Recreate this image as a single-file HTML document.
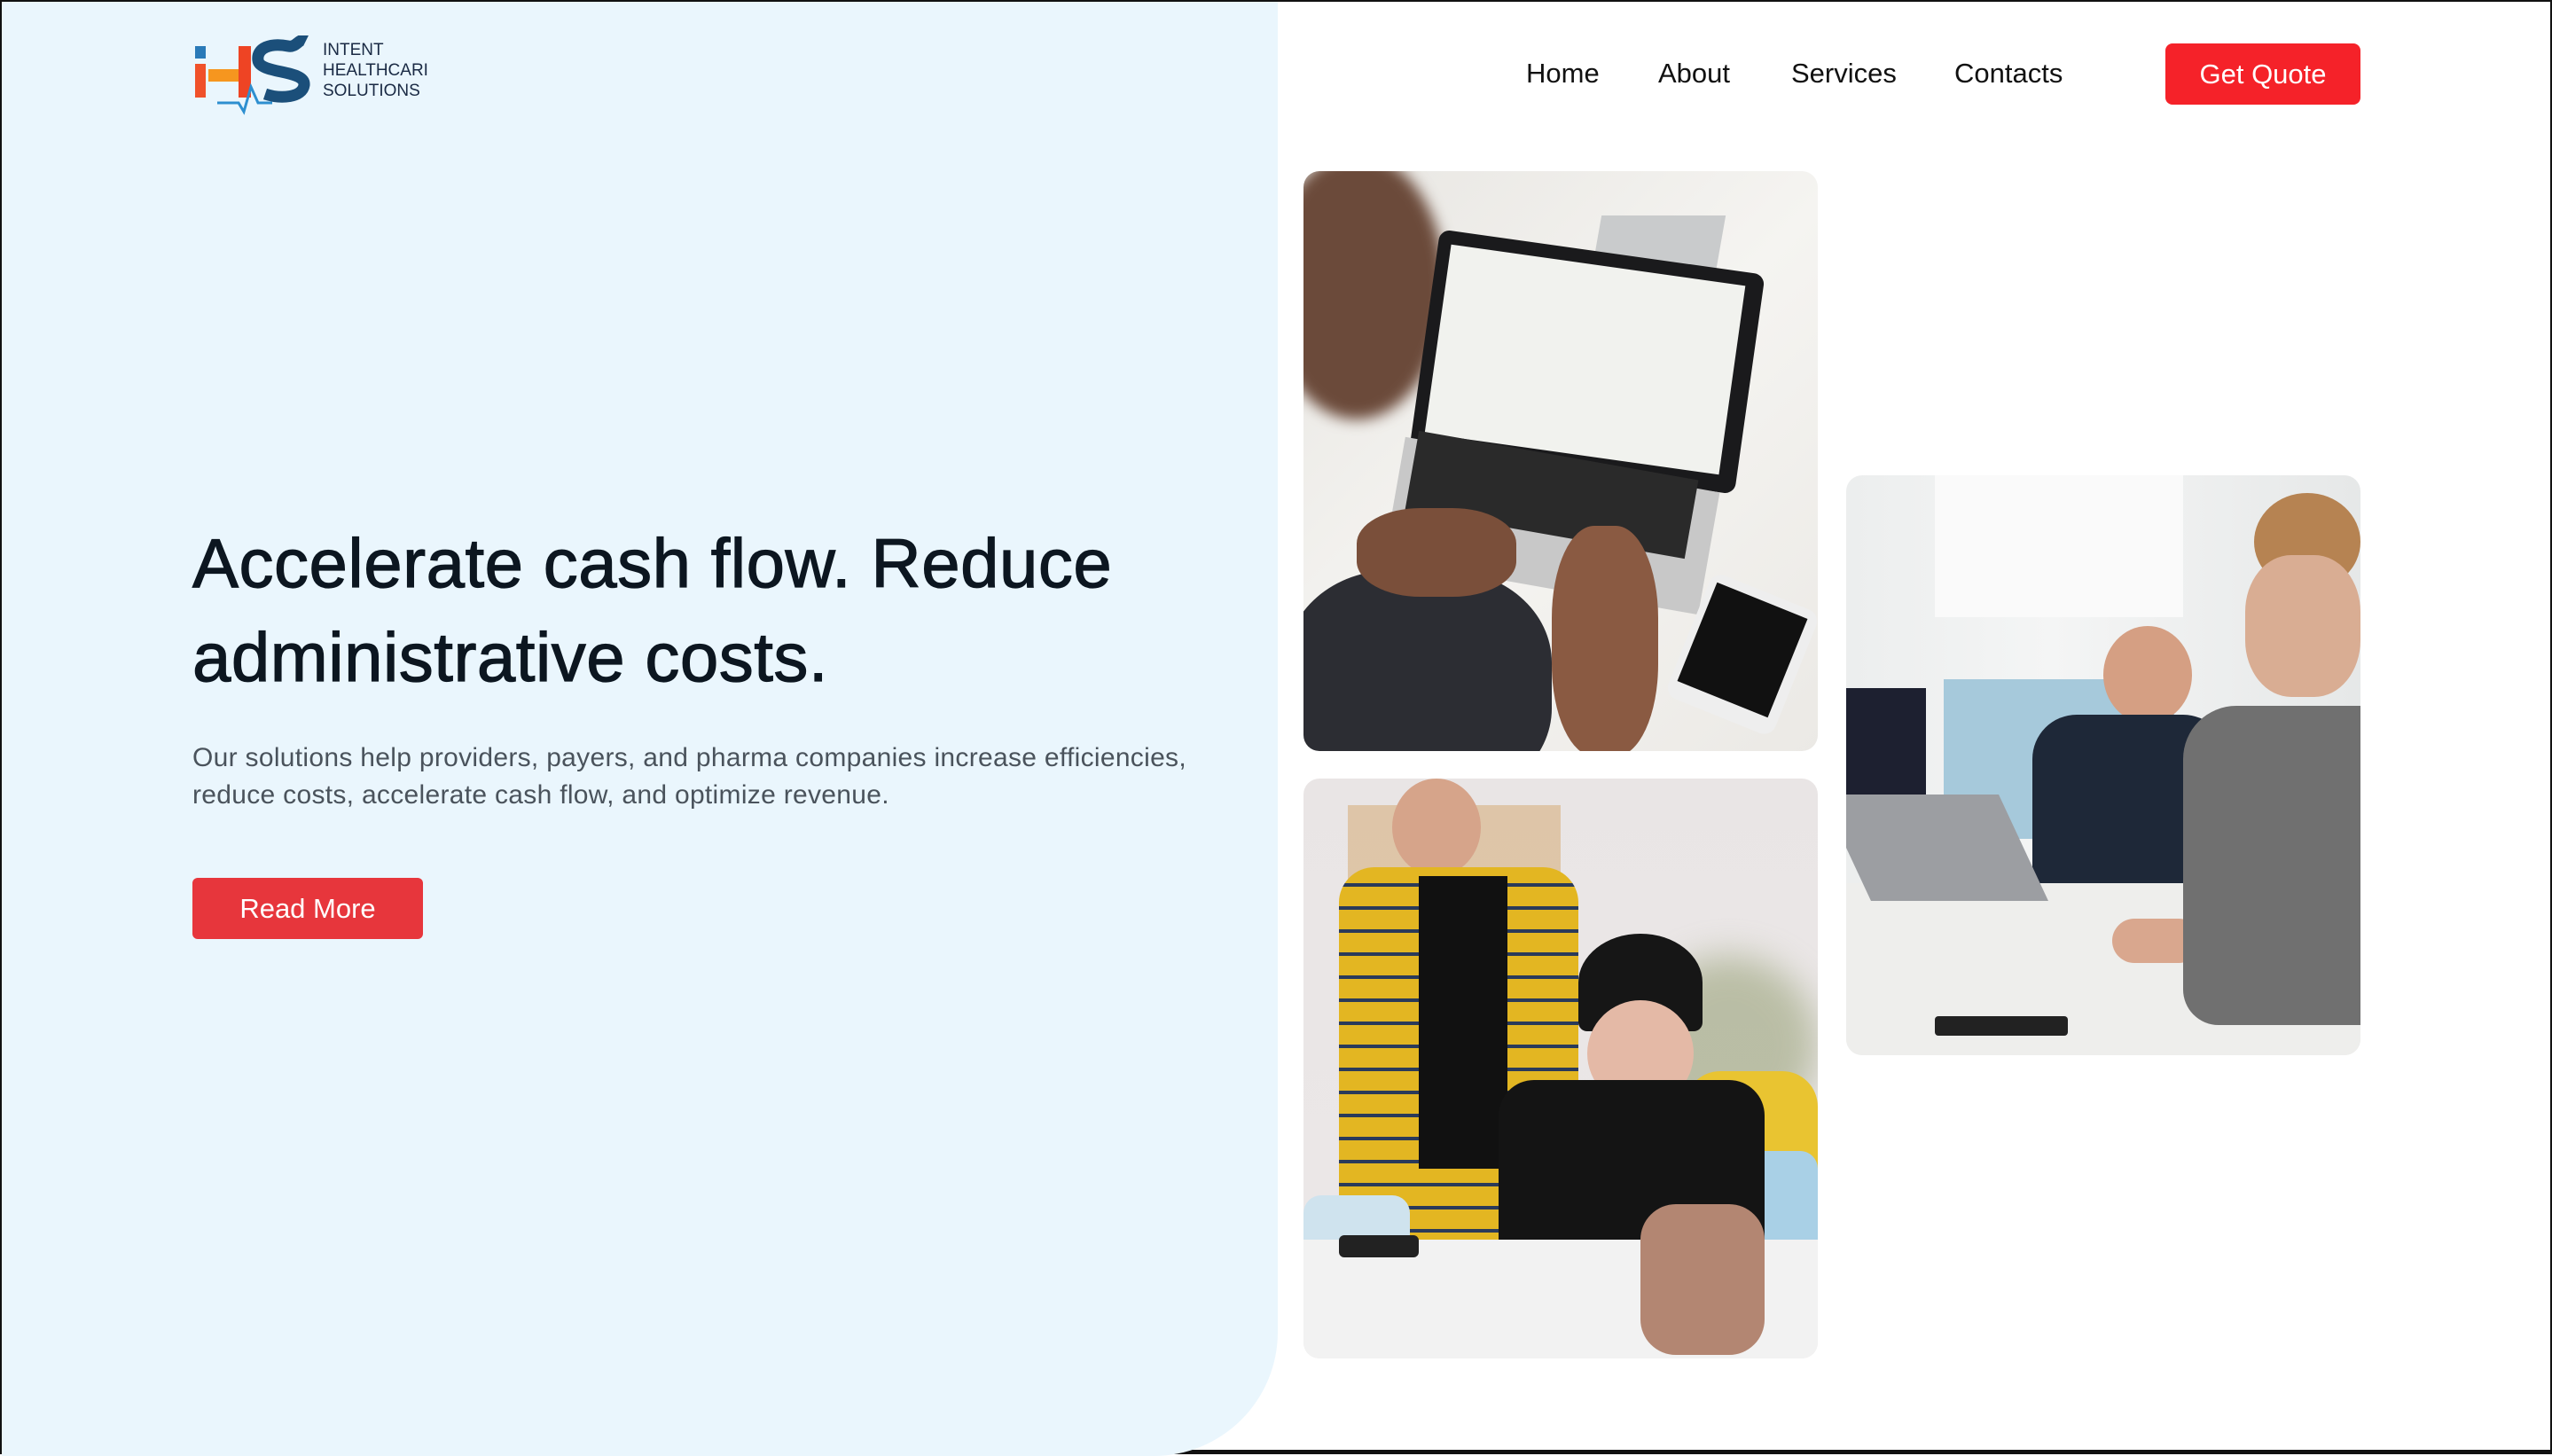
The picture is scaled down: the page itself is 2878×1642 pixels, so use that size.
<!DOCTYPE html>
<html><head><meta charset="utf-8"><style>
*{margin:0;padding:0;box-sizing:border-box}
body{width:2878px;height:1640px;overflow:hidden;background:#fff;font-family:"Liberation Sans",sans-serif;position:relative;border:2px solid #111;border-bottom-width:5px}
.panel{position:absolute;left:0;top:0;width:1439px;height:1640px;background:#eaf6fd;border-bottom-right-radius:140px}
.nav a{position:absolute;top:63px;font-size:31px;color:#111;text-decoration:none}
.btnq{position:absolute;left:2440px;top:47px;width:220px;height:69px;background:#f52229;border-radius:8px;color:#fff;font-size:31px;text-align:center;line-height:69px}
h1{position:absolute;left:215px;top:580px;font-size:78px;font-weight:normal;line-height:106px;color:#0c1620;letter-spacing:0.5px;-webkit-text-stroke:1.2px #0c1620}
p.t{position:absolute;left:215px;top:832px;font-size:30px;line-height:42px;color:#4a535c;width:1200px;letter-spacing:0.3px}
.rm{position:absolute;left:215px;top:988px;width:260px;height:69px;background:#e7363c;border-radius:6px;color:#fff;font-size:31px;text-align:center;line-height:69px}
.img{position:absolute;width:580px;height:654px;border-radius:18px;overflow:hidden}
.img div{position:absolute}
</style></head><body>
<div class="panel"></div>
<svg style="position:absolute;left:215px;top:38px" width="320" height="92" viewBox="0 0 320 92">
<rect x="3" y="12" width="12" height="14" fill="#2a7ab8"/>
<rect x="3" y="32" width="12" height="38" fill="#f0512a"/>
<rect x="18" y="38" width="34" height="14" fill="#f6961f"/>
<rect x="52" y="12" width="14" height="58" fill="#ee4424"/>
<path d="M128 6 C120 2 118 14 108 12 C88 8 72 14 74 28 C76 44 128 38 126 56 C124 70 100 72 82 66" fill="none" stroke="#1b4f7a" stroke-width="13"/>
<polyline points="28,76 52,76 58,86 66,58 74,76 90,76" fill="none" stroke="#2d8fd0" stroke-width="3"/>
<text x="147" y="22" font-size="19" fill="#1a2a44" font-family="Liberation Sans">INTENT</text>
<text x="147" y="45" font-size="19" fill="#1a2a44" font-family="Liberation Sans">HEALTHCARI</text>
<text x="147" y="68" font-size="19" fill="#1a2a44" font-family="Liberation Sans">SOLUTIONS</text>
</svg>
<div class="nav"><a style="left:1719px">Home</a><a style="left:1868px">About</a><a style="left:2018px">Services</a><a style="left:2202px">Contacts</a></div>
<div class="btnq">Get Quote</div>
<h1>Accelerate cash flow. Reduce<br>administrative costs.</h1>
<p class="t">Our solutions help providers, payers, and pharma companies increase efficiencies,<br>reduce costs, accelerate cash flow, and optimize revenue.</p>
<div class="rm">Read More</div>

<div class="img" style="left:1468px;top:191px;background:linear-gradient(135deg,#e8e6e2,#f5f4f1 50%,#ebe9e5)">
<div style="left:-40px;top:-20px;width:200px;height:300px;border-radius:50%;background:#6b4a3a;filter:blur(8px)"></div>
<div style="left:330px;top:50px;width:140px;height:70px;background:#c9cbcc;transform:skewX(-10deg)"></div>
<div style="left:135px;top:90px;width:370px;height:250px;background:#1a1a1c;border-radius:12px;transform:rotate(8deg)"></div>
<div style="left:150px;top:105px;width:335px;height:215px;background:#f1f2ee;transform:rotate(8deg)"></div>
<div style="left:100px;top:330px;width:360px;height:140px;background:#c8c8c8;transform:rotate(10deg)"></div>
<div style="left:120px;top:320px;width:320px;height:90px;background:#2a2a2a;transform:rotate(10deg)"></div>
<div style="left:430px;top:470px;width:130px;height:150px;background:#eee;border-radius:14px;transform:rotate(22deg)"></div>
<div style="left:440px;top:480px;width:110px;height:120px;background:#111;transform:rotate(22deg)"></div>
<div style="left:-20px;top:450px;width:300px;height:260px;background:#2c2d33;border-radius:40%"></div>
<div style="left:60px;top:380px;width:180px;height:100px;background:#7a4f3a;border-radius:40%"></div>
<div style="left:280px;top:400px;width:120px;height:260px;background:#8a5a42;border-radius:40%"></div>
</div>

<div class="img" style="left:1468px;top:876px;background:linear-gradient(180deg,#e9e5e5,#ece8e8)">
<div style="left:50px;top:30px;width:240px;height:380px;background:#d9b88f;opacity:.7"></div>
<div style="left:380px;top:200px;width:200px;height:200px;background:#9aa37a;border-radius:50%;filter:blur(20px);opacity:.6"></div>
<div style="left:430px;top:330px;width:150px;height:230px;background:#e9c431;border-radius:40px"></div>
<div style="left:100px;top:0;width:100px;height:110px;background:#d6a48a;border-radius:50%"></div>
<div style="left:40px;top:100px;width:270px;height:460px;background:repeating-linear-gradient(0deg,#e3b622 0 22px,#2a3a5a 22px 26px),#e3b622;border-radius:40px 40px 10px 10px"></div>
<div style="left:130px;top:110px;width:100px;height:330px;background:#111"></div>
<div style="left:0;top:470px;width:120px;height:150px;background:#cfe3ee;border-radius:20px"></div>
<div style="left:460px;top:420px;width:120px;height:160px;background:#a9d0e6;border-radius:20px"></div>
<div style="left:310px;top:175px;width:140px;height:110px;background:#161616;border-radius:50% 50% 10px 10px"></div>
<div style="left:320px;top:250px;width:120px;height:120px;background:#e4b9a6;border-radius:50%"></div>
<div style="left:220px;top:340px;width:300px;height:250px;background:#141414;border-radius:40px"></div>
<div style="left:0;top:520px;width:580px;height:134px;background:#f2f2f2"></div>
<div style="left:380px;top:480px;width:140px;height:170px;background:#b38672;border-radius:40px"></div>
<div style="left:40px;top:515px;width:90px;height:25px;background:#222;border-radius:6px"></div>
</div>

<div class="img" style="left:2080px;top:534px;background:linear-gradient(90deg,#eceeee,#f4f5f5 40%,#e6e8e8)">
<div style="left:100px;top:0;width:280px;height:160px;background:#fafafa"></div>
<div style="left:110px;top:230px;width:260px;height:180px;background:#a6c9db"></div>
<div style="left:0;top:240px;width:90px;height:150px;background:#1d2030"></div>
<div style="left:290px;top:170px;width:100px;height:110px;background:#d59f83;border-radius:50%"></div>
<div style="left:210px;top:270px;width:220px;height:230px;background:#1e2838;border-radius:50px 50px 10px 10px"></div>
<div style="left:460px;top:20px;width:120px;height:110px;background:#b68352;border-radius:50%"></div>
<div style="left:450px;top:90px;width:130px;height:160px;background:#d9ad93;border-radius:40%"></div>
<div style="left:0;top:460px;width:580px;height:194px;background:#eeeeec"></div>
<div style="left:0;top:360px;width:200px;height:120px;background:#9c9ea2;transform:skewX(25deg)"></div>
<div style="left:300px;top:500px;width:100px;height:50px;background:#d9a78e;border-radius:30px"></div>
<div style="left:380px;top:260px;width:220px;height:360px;background:#707070;border-radius:60px 0 0 40px"></div>
<div style="left:100px;top:610px;width:150px;height:22px;background:#222;border-radius:4px"></div>
</div>
</body></html>
